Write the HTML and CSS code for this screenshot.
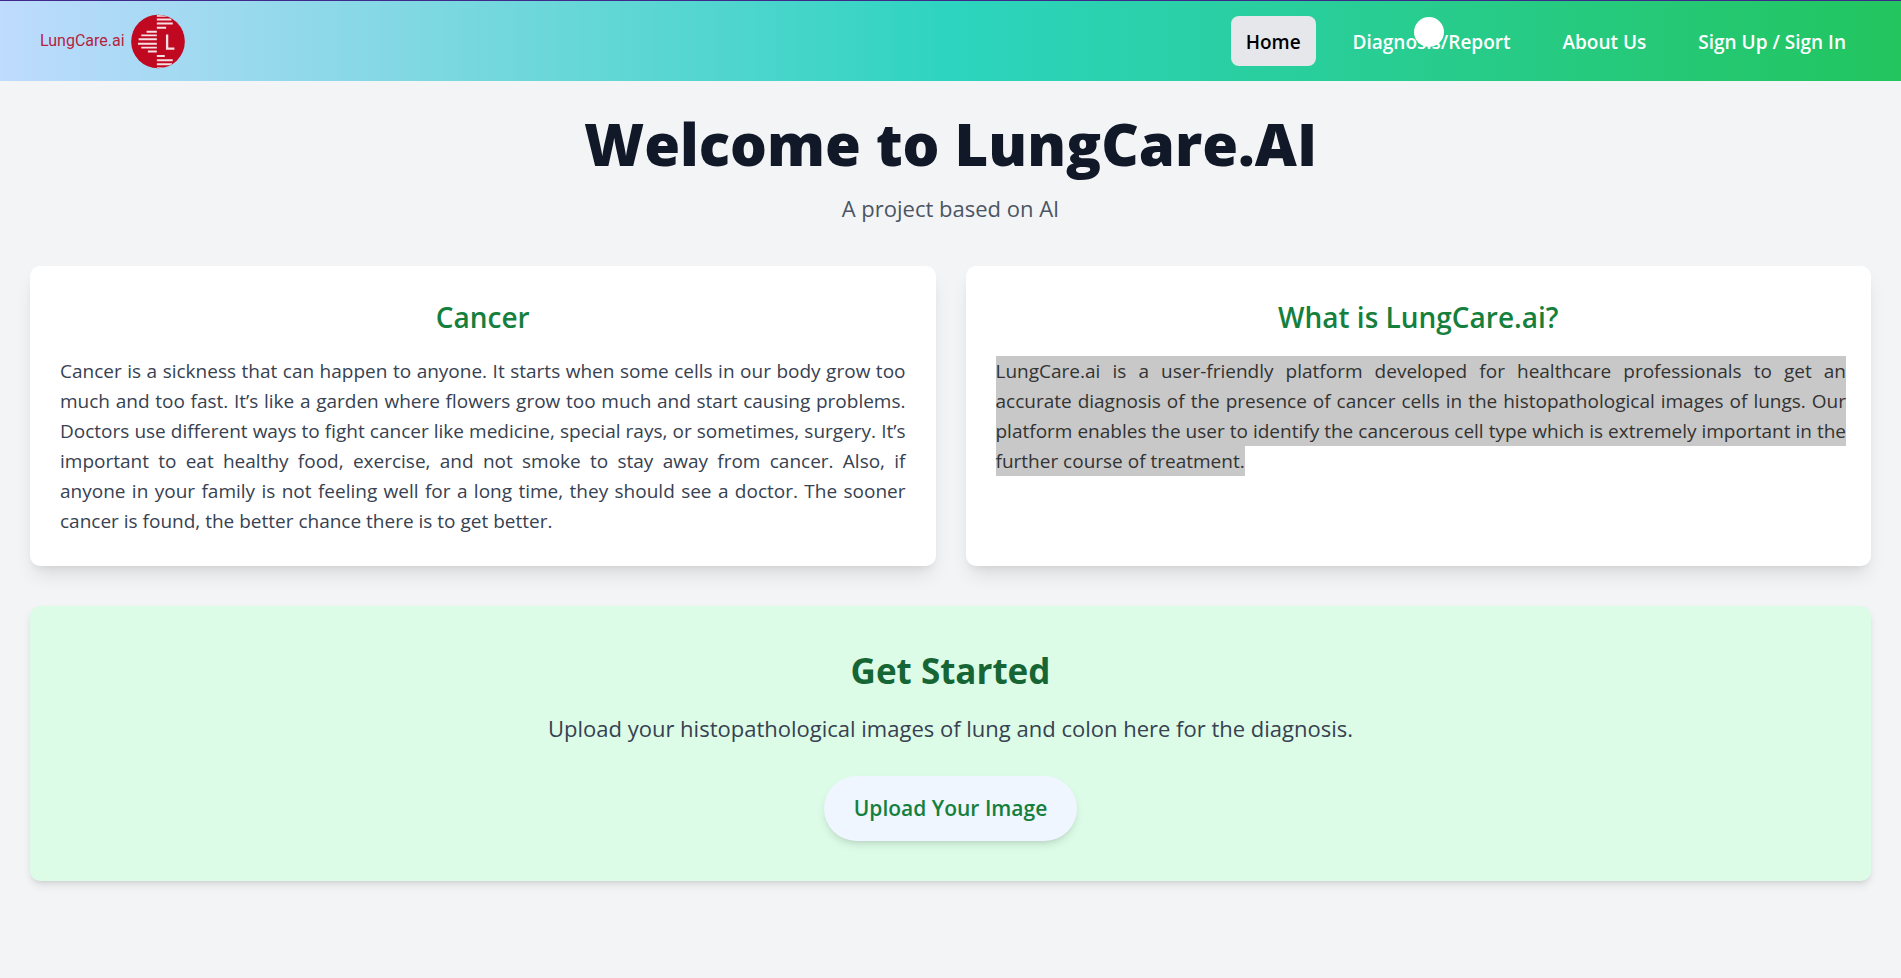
FILE: index.html
```html
<!DOCTYPE html>
<html lang="en">
<head>
  <meta charset="utf-8">
  <meta name="viewport" content="width=device-width, initial-scale=1">
  <title>LungCare.ai</title>
  <link rel="stylesheet" href="styles.css">
</head>
<body>
  <header class="header">
    <a class="logo" href="#">
      <span class="logo-text">LungCare.ai</span>
      <svg class="logo-mark" viewBox="18 17 163 165" aria-hidden="true">
        <defs><clipPath id="disc"><circle cx="99.500" cy="99.500" r="80"/></clipPath></defs>
        <circle cx="99.500" cy="99.500" r="81" fill="#c00820"/>
        <g clip-path="url(#disc)" stroke="#f6dfe4" stroke-width="6" fill="none">
          <path d="M65 70H96M49 81H96M41 93H96M39 106H96M49 118H96M69 130H96"/>
          <path d="M96 22H130M96 33H140M96 45H144M96 58H124"/>
          <path d="M96 143H120M96 156H144M96 168H142M96 180H130"/>
          <path d="M127 78V121H149" stroke-width="7"/>
        </g>
      </svg>
    </a>
    <nav class="nav">
      <a class="nav-link active" href="#">Home</a>
      <a class="nav-link" href="#">Diagnosis/Report<span class="pointer"></span></a>
      <a class="nav-link" href="#">About Us</a>
      <a class="nav-link" href="#">Sign Up / Sign In</a>
    </nav>
  </header>
  <main class="main">
    <h1 class="title">Welcome to LungCare.AI</h1>
    <p class="subtitle">A project based on AI</p>
    <div class="cards">
      <section class="card">
        <h2 class="card-title">Cancer</h2>
        <p class="card-text">Cancer is a sickness that can happen to anyone. It starts when some cells in our body grow too much and too fast. It’s like a garden where flowers grow too much and start causing problems. Doctors use different ways to fight cancer like medicine, special rays, or sometimes, surgery. It’s important to eat healthy food, exercise, and not smoke to stay away from cancer. Also, if anyone in your family is not feeling well for a long time, they should see a doctor. The sooner cancer is found, the better chance there is to get better.</p>
      </section>
      <section class="card">
        <h2 class="card-title">What is LungCare.ai?</h2>
        <p class="card-text marked"><mark class="highlight">LungCare.ai is a user-friendly platform developed for healthcare professionals to get an accurate diagnosis of the presence of cancer cells in the histopathological images of lungs. Our platform enables the user to identify the cancerous cell type which is extremely important in the further course of treatment.</mark></p>
      </section>
    </div>
    <section class="start">
      <h2 class="start-title">Get Started</h2>
      <p class="start-text">Upload your histopathological images of lung and colon here for the diagnosis.</p>
      <button class="upload" type="button">Upload Your Image</button>
    </section>
  </main>
</body>
</html>
```
FILE: styles.css
```css
* {
  box-sizing: border-box;
}

body {
  margin: 0;
  min-height: 100vh;
  border-top: 1px solid #3f2a8c;
  background: #f3f4f6;
  color: #374151;
  font-family: "Open Sans", "Noto Sans", sans-serif;
  font-size: 19px;
  line-height: 30px;
}

h1,
h2,
p {
  margin: 0;
}

.header {
  display: flex;
  align-items: center;
  justify-content: space-between;
  padding: 10px 40px;
  min-height: 80px;
  background: linear-gradient(to right, #bfdbfe, #2dd4bf, #22c55e);
}

.logo {
  display: flex;
  align-items: center;
  gap: 6px;
  color: #b5243f;
  text-decoration: none;
}

.logo-text {
  font-family: "Roboto", sans-serif;
  font-size: 16px;
}

.logo-mark {
  width: 54px;
  height: 55px;
}

.nav {
  display: flex;
  gap: 22px;
}

.nav-link {
  position: relative;
  padding: 11px 15px 9px;
  border-radius: 8px;
  color: #fff;
  font-weight: 600;
  text-decoration: none;
}

.nav-link.active {
  background: #e5e7eb;
  color: #000;
}

.pointer {
  position: absolute;
  top: 1px;
  left: 76px;
  width: 30px;
  height: 30px;
  border-radius: 50%;
  background: #fff;
}

.main {
  padding: 30px;
  text-align: center;
}

.title {
  margin-bottom: 14px;
  color: #111827;
  font-size: 58px;
  font-weight: 800;
  line-height: 66px;
}

.subtitle {
  margin-bottom: 40px;
  color: #4b5563;
  font-size: 22px;
  line-height: 35px;
}

.cards {
  display: grid;
  grid-template-columns: 1fr 1fr;
  gap: 30px;
  margin-bottom: 40px;
}

.card {
  padding: 30px;
  border-radius: 10px;
  background: #fff;
  box-shadow: 0 12px 19px -4px rgba(0, 0, 0, 0.1), 0 5px 8px -5px rgba(0, 0, 0, 0.1);
}

.card-title {
  margin-bottom: 18px;
  color: #15803d;
  font-size: 28px;
  font-weight: 600;
  line-height: 42px;
}

.card-text {
  text-align: justify;
}

/* The highlighted text runs slightly past the right edge of the column. */
.marked {
  margin-right: -5px;
}

.highlight {
  padding: 2px 0;
  background: #c8c8c8;
  color: #333;
}

.start {
  padding: 40px;
  border-radius: 10px;
  background: #dcfce7;
  box-shadow: 0 5px 8px -1px rgba(0, 0, 0, 0.1), 0 3px 5px -3px rgba(0, 0, 0, 0.1);
}

.start-title {
  margin-bottom: 16px;
  color: #166534;
  font-size: 35px;
  font-weight: 700;
  line-height: 49px;
}

.start-text {
  margin-bottom: 30px;
  font-size: 22px;
  line-height: 35px;
}

.upload {
  display: inline-block;
  padding: 15px 30px;
  border: 0;
  border-radius: 33px;
  background: #eff6ff;
  box-shadow: 0 5px 8px -1px rgba(0, 0, 0, 0.1), 0 3px 5px -3px rgba(0, 0, 0, 0.1);
  color: #15803d;
  font-family: inherit;
  font-size: 21px;
  font-weight: 600;
  line-height: 35px;
  vertical-align: top;
}
```
